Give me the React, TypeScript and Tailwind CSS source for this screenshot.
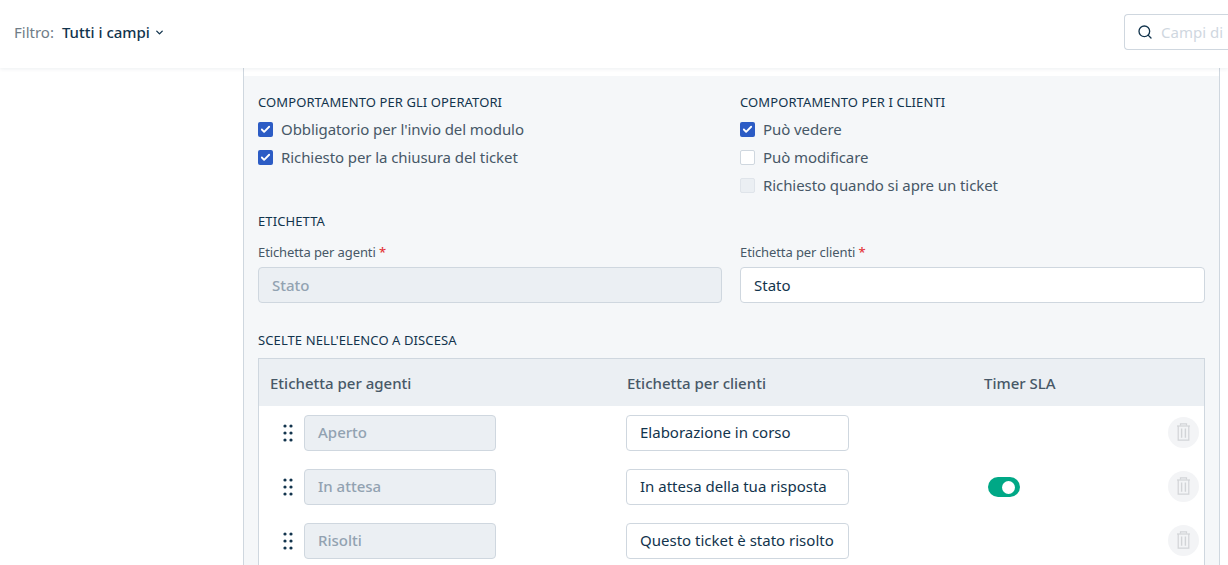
import { Check, ChevronDown, Search } from "lucide-react";

const rows = [
  { agent: "Aperto", client: "Elaborazione in corso", sla: false },
  { agent: "In attesa", client: "In attesa della tua risposta", sla: true },
  { agent: "Risolti", client: "Questo ticket è stato risolto", sla: false },
];

function Box({ state }: { state: "on" | "off" | "disabled" }) {
  if (state === "on") {
    return (
      <span className="w-[15px] h-[15px] rounded-[2px] bg-[#2c5cc5] flex items-center justify-center shrink-0">
        <Check size={11} strokeWidth={4} className="text-white" />
      </span>
    );
  }
  return (
    <span
      className={
        state === "off"
          ? "w-[15px] h-[15px] rounded-[2px] bg-white border border-[#cfd7df] shrink-0"
          : "w-[15px] h-[15px] rounded-[2px] bg-[#ebeff3] border border-[#dfe4ea] shrink-0"
      }
    />
  );
}

function CheckRow({ state, label }: { state: "on" | "off" | "disabled"; label: string }) {
  return (
    <div className="flex items-center gap-[9px] h-7 text-[15px] text-[#475867] tracking-[-0.08px]">
      <Box state={state} />
      <span className="-ml-px">{label}</span>
    </div>
  );
}

function Heading({ children }: { children: string }) {
  return <h3 className="text-[13px] leading-5 font-normal text-[#12344d] tracking-[0.1px]">{children}</h3>;
}

function LabelField({ label, value, disabled }: { label: string; value: string; disabled?: boolean }) {
  return (
    <div className={disabled ? "w-[464px]" : "flex-1"}>
      <div className="text-[13px] leading-5 text-[#475867] tracking-[-0.1px]">
        {label} <span className="text-[#e43538] font-medium">*</span>
      </div>
      <div
        className={
          disabled
            ? "mt-[5px] h-9 px-[13px] flex items-center rounded border border-[#cfd7df] bg-[#ebeff3] text-[15px] font-medium text-[#92a2b1]"
            : "mt-[5px] h-9 px-[13px] flex items-center rounded border border-[#cfd7df] bg-white text-[15px] text-[#12344d]"
        }
      >
        {value}
      </div>
    </div>
  );
}

function Grip() {
  return (
    <svg width="10" height="20" viewBox="0 0 10 20" className="text-[#12344d] shrink-0">
      <g fill="currentColor">
        <circle cx="2" cy="3" r="1.6" />
        <circle cx="8" cy="3" r="1.6" />
        <circle cx="2" cy="10" r="1.6" />
        <circle cx="8" cy="10" r="1.6" />
        <circle cx="2" cy="17" r="1.6" />
        <circle cx="8" cy="17" r="1.6" />
      </g>
    </svg>
  );
}

function TrashIcon() {
  return (
    <svg width="13" height="18" viewBox="0 0 13 18" fill="none" stroke="#d2d4d7" strokeWidth="1.2" className="-mt-[2px]">
      <path d="M3.5 2.6V0.8h6v1.8" />
      <path d="M0 3h13" />
      <path d="M1.2 3v14.2h10.6V3" />
      <path d="M4.6 5.5v9.2M8.4 5.5v9.2" strokeWidth="1.4" />
    </svg>
  );
}

export default function App() {
  return (
    <div className="h-[565px] w-[1228px] overflow-hidden bg-white flex flex-col font-['Noto_Sans',sans-serif]">
      {/* Header */}
      <header className="h-[68px] shrink-0 flex items-center justify-between pl-[14px] shadow-[0_1px_4px_rgba(18,52,77,0.08)] relative z-10 bg-white">
        <div className="flex items-center text-[15px] -mt-[3px]">
          <span className="text-[#6f7c87]">Filtro:</span>
          <span className="ml-2 font-medium text-[#12344d]">Tutti i campi</span>
          <ChevronDown size={11} strokeWidth={3} className="ml-1 text-[#12344d]" />
        </div>
        <div className="w-[104px] h-9 -mt-[4px] flex items-center gap-2 pl-3 rounded-l border border-r-0 border-[#cfd7df] text-[15px] text-[#cfd7df] overflow-hidden whitespace-nowrap">
          <Search size={16} className="text-[#12344d] shrink-0" />
          <span>Campi di</span>
        </div>
      </header>

      <div className="flex-1 ml-[243px] mr-[8px] border-x border-[#cfd7df] min-h-0 pt-2 bg-white">
        <div className="h-full bg-[#f5f7f9] pt-4 pl-[14px] pr-[14px]">
          <div className="flex gap-[18px]">
            <div className="w-[464px]">
              <Heading>COMPORTAMENTO PER GLI OPERATORI</Heading>
              <div className="mt-[3px]">
                <CheckRow state="on" label="Obbligatorio per l'invio del modulo" />
                <CheckRow state="on" label="Richiesto per la chiusura del ticket" />
              </div>
            </div>
            <div className="flex-1">
              <Heading>COMPORTAMENTO PER I CLIENTI</Heading>
              <div className="mt-[3px]">
                <CheckRow state="on" label="Può vedere" />
                <CheckRow state="off" label="Può modificare" />
                <CheckRow state="disabled" label="Richiesto quando si apre un ticket" />
              </div>
            </div>
          </div>

          <div className="mt-[12px]">
            <Heading>ETICHETTA</Heading>
          </div>
          <div className="mt-[11px] flex gap-[18px]">
            <LabelField label="Etichetta per agenti" value="Stato" disabled />
            <LabelField label="Etichetta per clienti" value="Stato" />
          </div>

          <div className="mt-[27px]">
            <Heading>SCELTE NELL'ELENCO A DISCESA</Heading>
          </div>

          {/* Choices table */}
          <div className="mt-2 border border-[#cfd7df] bg-white">
            <div className="h-[47px] pt-[2px] bg-[#ebeff3] grid grid-cols-[357px_357px_1fr] items-center pl-[11px] text-[15px] font-medium text-[#475867]">
              <span>Etichetta per agenti</span>
              <span>Etichetta per clienti</span>
              <span>Timer SLA</span>
            </div>
            <div className="pt-[9px]">
              {rows.map((row) => (
                <div key={row.agent} className="h-[54px] flex items-start">
                  <div className="w-[367px] flex items-center pl-6 h-9 gap-[11px]">
                    <Grip />
                    <div className="w-[192px] h-9 pb-[2px] px-[13px] flex items-center rounded border border-[#cfd7df] bg-[#ebeff3] text-[15px] font-medium text-[#92a2b1]">
                      {row.agent}
                    </div>
                  </div>
                  <div className="w-[358px] h-9">
                    <div className="w-[223px] h-9 pb-[2px] px-[13px] flex items-center rounded border border-[#cfd7df] bg-white text-[15px] text-[#12344d] whitespace-nowrap overflow-hidden">
                      {row.client}
                    </div>
                  </div>
                  <div className="flex-1 h-9 flex items-center pl-[4px]">
                    {row.sla && (
                      <span className="w-8 h-5 rounded-full bg-[#00a886] flex items-center justify-end pr-[5px]">
                        <span className="w-[13px] h-[13px] rounded-full bg-white" />
                      </span>
                    )}
                  </div>
                  <div className="w-[31px] mr-[5px] h-9 flex items-center">
                    <span className="w-[31px] h-[31px] -mt-px rounded-full bg-[#f3f4f6] flex items-center justify-center">
                      <TrashIcon />
                    </span>
                  </div>
                </div>
              ))}
            </div>
          </div>
        </div>
      </div>
    </div>
  );
}
